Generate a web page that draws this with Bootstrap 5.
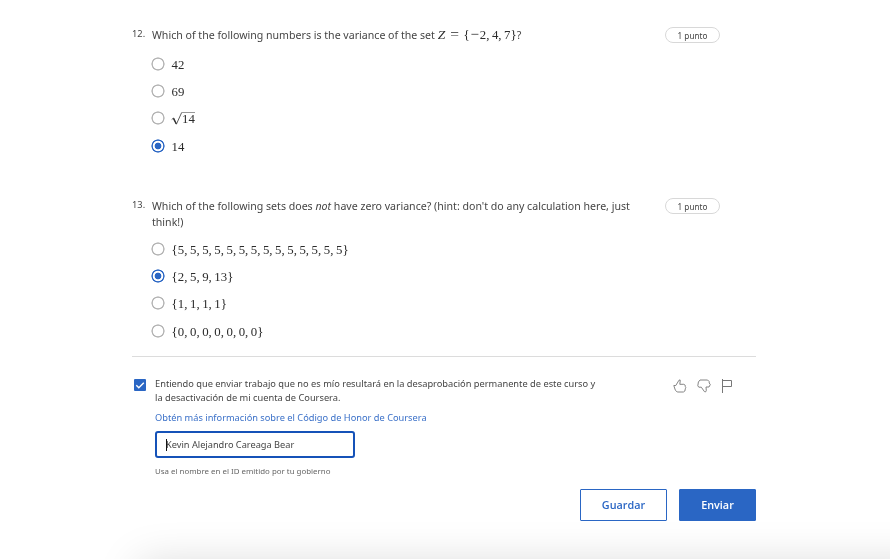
<!DOCTYPE html>
<html lang="es">
<head>
<meta charset="utf-8">
<meta name="viewport" content="width=device-width, initial-scale=1">
<title>Coursera</title>
<link href="https://cdn.jsdelivr.net/npm/bootstrap@5.3.0/dist/css/bootstrap.min.css" rel="stylesheet">
<style>
body{font-family:"Noto Sans","Open Sans",sans-serif;color:#454545;font-size:10.6px;line-height:16px;background:#fff;height:559px;overflow:hidden}
.quiz{width:624px;margin-left:132px;padding-top:27px}
.question{height:171px}
.question.second{height:158px}
.num{width:20px;font-size:9.3px;line-height:14px}
.prompt{width:513px;font-size:10.6px;height:32px;white-space:nowrap}
.question:not(.second) .prompt{height:16px}
.points{width:55px;height:16px;border:1px solid #d8d8d8;font-size:8.2px;line-height:16px;color:#444}
.choices{padding:7px 0 0 19px}
.second .choices{padding-top:5px}
.choice{height:27.35px}
.choice .form-check-input{width:14px;height:14px;margin:0;border:0;flex:none;background:radial-gradient(circle,transparent 0 4.9px,#b4b4b4 5.6px 6.3px,transparent 6.9px);box-shadow:none}
.choice .form-check-input:checked{background:radial-gradient(circle,#2a66c4 0 3px,#fff 3.7px 4.9px,#2a66c4 5.6px 6.3px,transparent 6.9px)}
.math{font-family:"Liberation Serif",serif;font-size:12.8px;color:#2b2b2b;white-space:nowrap}
.choice .math{margin-left:6.5px;position:relative;top:1px}
.choice .math.d-inline-flex{margin-left:6px;top:0}
.sep{display:inline-block;width:5.75px}
.brace{display:inline-block;width:6.35px;text-align:center}
.zed{display:inline-block;width:12.6px;text-align:left;font-size:13.5px;line-height:12px}
.equals{display:inline-block;width:13.2px;text-align:left;font-size:15.5px;line-height:12px}
.minus{display:inline-block;width:10px;text-align:center;font-size:15px;line-height:12px}
.honor{border-top:1px solid #dcdcdc;padding:20px 0 0 2px}
.honor-check{width:12px;height:12px;border-radius:1px;background:#2a66c4;margin:2px 9px 0 0;flex:none}
.honor-copy{font-size:9.28px;line-height:14px}
.honor-copy a{color:#3a70c8;font-size:9.25px}
.name-field{width:200px;height:27px;border:2px solid #1552b8;border-radius:3px;font-size:9.22px;padding:0 9px;color:#454545;margin-top:6px}
.caret{width:1px;height:12px;background:#111;margin-right:-1px}
.hint{font-size:7.9px;line-height:12px;color:#666;margin-top:7px}
.reactions{gap:10px;padding:2px 21px 0 0}
.actions{gap:12px;margin-top:12px}
.actions .btn{height:32px;border-radius:1px;font-family:"Open Sans",sans-serif;font-size:10.8px;font-weight:600;padding:0;line-height:30px;border:1px solid #2a66c4}
.save{width:87px;color:#2a66c4;background:#fff}
.send{width:77px;color:#fff;background:#2a66c4}
.dock{left:146px;right:-40px;top:570px;height:60px;box-shadow:0 0 44px 7px rgba(0,0,0,.15)}
</style>
<script src="https://cdn.jsdelivr.net/npm/bootstrap@5.3.0/dist/js/bootstrap.bundle.min.js"></script>
</head>
<body>
<div class="dock position-fixed"></div>
<main class="quiz position-relative">
<section class="question">
<div class="d-flex align-items-start"><span class="num">12.</span>
<div class="prompt">Which of the following numbers is the variance of the set <span class="math"><i class="zed">Z</i><span class="equals">=</span><span class="brace">{</span><span class="minus">−</span>2<span class="sep">,</span>4<span class="sep">,</span>7<span class="brace">}</span></span>?</div>
<span class="points rounded-pill text-center">1 punto</span></div>
<div class="choices">
<label class="choice d-flex align-items-center"><input class="form-check-input" type="radio" name="q12"><span class="math">42</span></label>
<label class="choice d-flex align-items-center"><input class="form-check-input" type="radio" name="q12"><span class="math">69</span></label>
<label class="choice d-flex align-items-center"><input class="form-check-input" type="radio" name="q12"><span class="math d-inline-flex"><svg width="25" height="15" viewBox="0 1 25 15" fill="none" stroke="#333"><path d="M.7 9.5 2.5 8 5.4 14.2 10.7 2.5" stroke-width=".8"/><path d="M2.5 8.4 5.2 13.7" stroke-width="1.4"/><path d="M10.5 2.5H24" stroke="#999"/><text x="11" y="13" fill="#2b2b2b" stroke="none" font-size="12.8">14</text></svg></span></label>
<label class="choice d-flex align-items-center"><input class="form-check-input" type="radio" name="q12" checked><span class="math">14</span></label>
</div>
</section>
<section class="question second">
<div class="d-flex align-items-start"><span class="num">13.</span>
<div class="prompt">Which of the following sets does <i>not</i> have zero variance? (hint: don't do any calculation here, just<br>think!)</div>
<span class="points rounded-pill text-center">1 punto</span></div>
<div class="choices">
<label class="choice d-flex align-items-center"><input class="form-check-input" type="radio" name="q13"><span class="math"><span class="brace">{</span>5<span class="sep">,</span>5<span class="sep">,</span>5<span class="sep">,</span>5<span class="sep">,</span>5<span class="sep">,</span>5<span class="sep">,</span>5<span class="sep">,</span>5<span class="sep">,</span>5<span class="sep">,</span>5<span class="sep">,</span>5<span class="sep">,</span>5<span class="sep">,</span>5<span class="sep">,</span>5<span class="brace">}</span></span></label>
<label class="choice d-flex align-items-center"><input class="form-check-input" type="radio" name="q13" checked><span class="math"><span class="brace">{</span>2<span class="sep">,</span>5<span class="sep">,</span>9<span class="sep">,</span>13<span class="brace">}</span></span></label>
<label class="choice d-flex align-items-center"><input class="form-check-input" type="radio" name="q13"><span class="math"><span class="brace">{</span>1<span class="sep">,</span>1<span class="sep">,</span>1<span class="sep">,</span>1<span class="brace">}</span></span></label>
<label class="choice d-flex align-items-center"><input class="form-check-input" type="radio" name="q13"><span class="math"><span class="brace">{</span>0<span class="sep">,</span>0<span class="sep">,</span>0<span class="sep">,</span>0<span class="sep">,</span>0<span class="sep">,</span>0<span class="sep">,</span>0<span class="brace">}</span></span></label>
</div>
</section>
<section class="honor d-flex align-items-start">
<div class="honor-check d-flex"><svg width="12" height="12" fill="none" stroke="#fff" stroke-width="1.4"><path d="m2.3 6.2 2.5 2.5 5-5"/></svg></div>
<div class="honor-copy flex-grow-1">
<div>Entiendo que enviar trabajo que no es mío resultará en la desaprobación permanente de este curso y<br>la desactivación de mi cuenta de Coursera.</div>
<div style="margin-top:6px"><a href="#" class="text-decoration-none">Obtén más información sobre el Código de Honor de Coursera</a></div>
<div class="name-field d-flex align-items-center"><span class="caret"></span><span>Kevin Alejandro Careaga Bear</span></div>
<div class="hint">Usa el nombre en el ID emitido por tu gobierno</div>
</div>
<div class="reactions d-flex">
<svg width="14" height="14" viewBox="0 0 14 14" fill="none" stroke="#777" stroke-width=".9"><path d="M.8 6.5H2.8L6 1.2Q7.6.3 7.2 2L6.8 5.3H10.8Q12.8 6 12.3 7.5 13.3 8.5 12.3 9.8 12.4 12.6 10.4 13H4.2L2.4 11.2 1.6 9Z"/></svg>
<svg width="14" height="14" viewBox="0 0 14 14" fill="none" stroke="#777" stroke-width=".9"><path d="M.8 6.8 1.4 3 3 1H10.6L12.2 2.6V4L13.3 5.5 12 8H9L9.3 11.5Q8.8 13.8 7.4 12.6L4.3 8.2H1.8Z"/></svg>
<svg width="14" height="14" fill="none" stroke="#777"><path d="M1.5 0V14M1.5 1.5H10.5V7.5H1.5"/></svg>
</div>
</section>
<div class="actions d-flex justify-content-end"><button class="btn save">Guardar</button><button class="btn send">Enviar</button></div>
</main>
</body>
</html>
